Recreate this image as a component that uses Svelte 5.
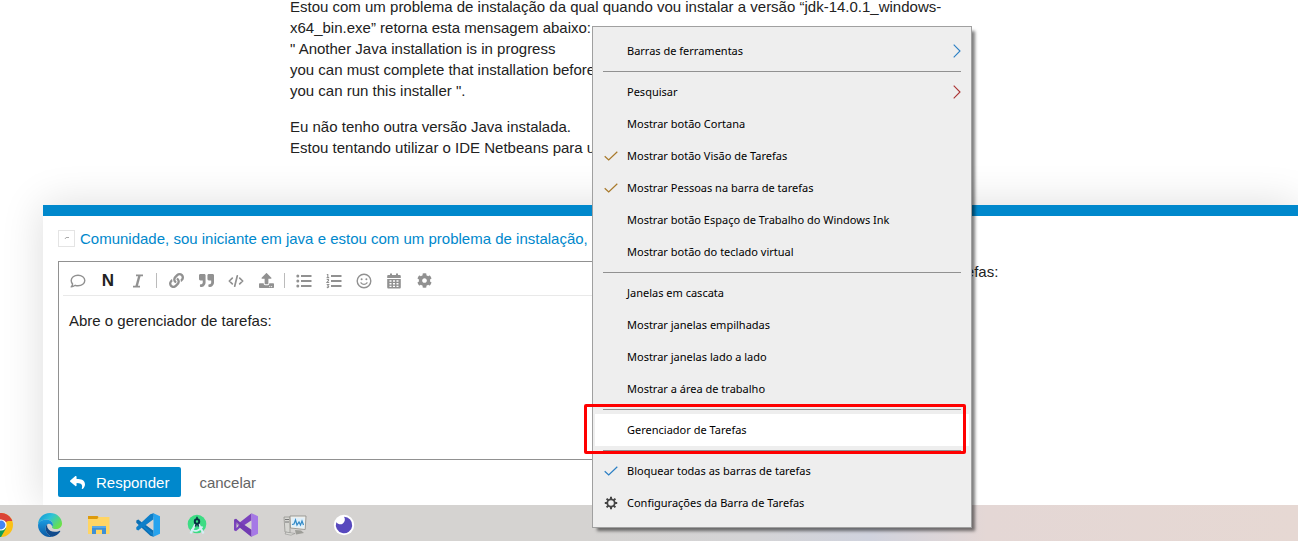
<script>
  const message = 'Abre o gerenciador de tarefas:';
  let draft = $state(message);

  const groups = [
    [{ label: 'Barras de ferramentas', submenu: 'blue' }],
    [
      { label: 'Pesquisar', submenu: 'red' },
      { label: 'Mostrar botão Cortana' },
      { label: 'Mostrar botão Visão de Tarefas', check: 'amber' },
      { label: 'Mostrar Pessoas na barra de tarefas', check: 'amber' },
      { label: 'Mostrar botão Espaço de Trabalho do Windows Ink' },
      { label: 'Mostrar botão do teclado virtual' }
    ],
    [
      { label: 'Janelas em cascata' },
      { label: 'Mostrar janelas empilhadas' },
      { label: 'Mostrar janelas lado a lado' },
      { label: 'Mostrar a área de trabalho' }
    ],
    [{ label: 'Gerenciador de Tarefas', active: true }],
    [
      { label: 'Bloquear todas as barras de tarefas', check: 'blue' },
      { label: 'Configurações da Barra de Tarefas', gear: true }
    ]
  ];

  const tools = [
    'comment', 'bold', 'italic', '|', 'link', 'quote', 'code', 'upload', '|',
    'bullets', 'numbers', 'emoji', 'calendar', 'gear'
  ];

  const gearPath = 'M487.4 315.7l-42.6-24.6c4.3-23.2 4.3-47 0-70.2l42.6-24.6c4.9-2.8 7.1-8.6 5.5-14-11.1-35.6-30-67.8-54.7-94.6-3.8-4.1-10-5.1-14.8-2.3L380.8 110c-17.9-15.4-38.5-27.3-60.8-35.1V25.8c0-5.6-3.9-10.5-9.4-11.7-36.7-8.2-74.3-7.8-109.2 0-5.5 1.2-9.4 6.1-9.4 11.7V75c-22.2 7.9-42.8 19.8-60.8 35.1L88.7 85.5c-4.9-2.8-11-1.9-14.8 2.3-24.7 26.7-43.6 58.9-54.7 94.6-1.7 5.4.6 11.2 5.5 14L67.3 221c-4.3 23.2-4.3 47 0 70.2l-42.6 24.6c-4.9 2.8-7.1 8.6-5.5 14 11.1 35.6 30 67.8 54.7 94.6 3.8 4.1 10 5.1 14.8 2.3l42.6-24.6c17.9 15.4 38.5 27.3 60.8 35.1v49.2c0 5.6 3.9 10.5 9.4 11.7 36.7 8.2 74.3 7.8 109.2 0 5.5-1.2 9.4-6.1 9.4-11.7v-49.2c22.2-7.9 42.8-19.8 60.8-35.1l42.6 24.6c4.9 2.8 11 1.9 14.8-2.3 24.7-26.7 43.6-58.9 54.7-94.6 1.5-5.5-.7-11.3-5.6-14.1zM256 336c-44.1 0-80-35.9-80-80s35.9-80 80-80 80 35.9 80 80-35.9 80-80 80z';

  const solid = {
    link: 'M326.612 185.391c59.747 59.809 58.927 155.698.36 214.59-.11.12-.24.25-.36.37l-67.2 67.2c-59.27 59.27-155.699 59.262-214.96 0-59.27-59.26-59.27-155.7 0-214.96l37.106-37.106c9.84-9.84 26.786-3.3 27.294 10.606.648 17.722 3.826 35.527 9.69 52.721 1.986 5.822.567 12.262-3.783 16.612l-13.087 13.087c-28.026 28.026-28.905 73.66-1.155 101.96 28.024 28.579 74.086 28.749 102.325.51l67.2-67.19c28.191-28.191 28.073-73.757 0-101.83-3.701-3.694-7.429-6.564-10.341-8.569a16.037 16.037 0 0 1-6.947-12.606c-.396-10.567 3.348-21.456 11.698-29.806l21.054-21.055c5.521-5.521 14.182-6.199 20.584-1.731a152.482 152.482 0 0 1 20.522 17.197zM467.547 44.449c-59.261-59.262-155.69-59.27-214.96 0l-67.2 67.2c-.12.12-.25.25-.36.37-58.566 58.892-59.387 154.781.36 214.59a152.454 152.454 0 0 0 20.521 17.196c6.402 4.468 15.064 3.789 20.584-1.731l21.054-21.055c8.35-8.35 12.094-19.239 11.698-29.806a16.037 16.037 0 0 0-6.947-12.606c-2.912-2.005-6.64-4.875-10.341-8.569-28.073-28.073-28.191-73.639 0-101.83l67.2-67.19c28.239-28.239 74.3-28.069 102.325.51 27.75 28.3 26.872 73.934-1.155 101.96l-13.087 13.087c-4.35 4.35-5.769 10.79-3.783 16.612 5.864 17.194 9.042 34.999 9.69 52.721.509 13.906 17.454 20.446 27.294 10.606l37.106-37.106c59.271-59.259 59.271-155.699.001-214.959z',
    quote: 'M464 32H336c-26.5 0-48 21.5-48 48v128c0 26.5 21.5 48 48 48h80v64c0 35.3-28.7 64-64 64h-8c-13.3 0-24 10.7-24 24v48c0 13.3 10.7 24 24 24h8c88.4 0 160-71.6 160-160V80c0-26.5-21.5-48-48-48zm-288 0H48C21.5 32 0 53.5 0 80v128c0 26.5 21.5 48 48 48h80v64c0 35.3-28.7 64-64 64h-8c-13.3 0-24 10.7-24 24v48c0 13.3 10.7 24 24 24h8c88.4 0 160-71.6 160-160V80c0-26.5-21.5-48-48-48z',
    upload: 'M296 384h-80c-13.3 0-24-10.7-24-24V192h-87.7c-17.8 0-26.7-21.5-14.1-34.1L242.3 5.7c7.5-7.5 19.8-7.5 27.3 0l152.2 152.2c12.6 12.6 3.7 34.1-14.1 34.1H320v168c0 13.3-10.7 24-24 24zm216-8v112c0 13.3-10.7 24-24 24H24c-13.3 0-24-10.7-24-24V376c0-13.3 10.7-24 24-24h136v8c0 30.9 25.1 56 56 56h80c30.9 0 56-25.1 56-56v-8h136c13.3 0 24 10.7 24 24zm-124 88c0-11-9-20-20-20s-20 9-20 20 9 20 20 20 20-9 20-20zm64 0c0-11-9-20-20-20s-20 9-20 20 9 20 20 20 20-9 20-20z',
    gear: gearPath
  };
</script>

<div class="screen">
  <main class="post">
    <p>
      Estou com um problema de instalação da qual quando vou instalar a versão “jdk-14.0.1_windows-<br />
      x64_bin.exe” retorna esta mensagem abaixo:<br />
      " Another Java installation is in progress<br />
      you can must complete that installation before<br />
      you can run this installer ".
    </p>
    <p>
      Eu não tenho outra versão Java instalada.<br />
      Estou tentando utilizar o IDE Netbeans para u
    </p>
  </main>

  <section class="composer">
    <div class="columns">
      <div class="editor">
        <div class="reply-to">
          <button class="toggle" aria-label="Opções">
            <svg width="6" height="4" viewBox="0 0 6 4"><path d="M1 3L2 1.500H5" fill="none" stroke="#aaa" /></svg>
          </button>
          <a href="#topic">Comunidade, sou iniciante em java e estou com um problema de instalação,</a>
        </div>
        <div class="box">
          <div class="toolbar">
            {#each tools as tool}
              {#if tool === '|'}
                <span class="divider"></span>
              {:else}
                <button class="tool" class:dark={tool === 'bold'} aria-label={tool}>
                  {#if solid[tool]}
                    <svg width="15" height="15" viewBox="0 0 512 512"><path fill="currentColor" d={solid[tool]} /></svg>
                  {:else if tool === 'bold'}
                    N
                  {:else}
                    <svg width="16" height="16" viewBox="0 0 16 16" fill="none" stroke="currentColor">
                      {#if tool === 'comment'}
                        <path stroke-width="1.400" stroke-linejoin="round" d="M8 2.200c3.800 0 6.800 2.300 6.800 5.300s-3 5.300-6.800 5.300c-1 0-2-.2-2.800-.5C4.200 13 2.800 13.800 1.200 13.900c.7-.8 1.300-1.800 1.400-2.900C1.700 10 1.200 8.800 1.200 7.500c0-3 3-5.300 6.800-5.300z" />
                      {:else if tool === 'italic'}
                        <path stroke-width="1.800" d="M6 2.400h7M3 13.600h7" /><path stroke-width="2.400" d="M9.500 2.500L6.500 13.500" />
                      {:else if tool === 'code'}
                        <path stroke-width="1.700" stroke-linecap="round" stroke-linejoin="round" d="M4.300 5.200L1.300 8l3 2.800M11.700 5.200l3 2.800-3 2.800M9.300 2.800L6.700 13.200" />
                      {:else if tool === 'bullets'}
                        <path stroke-width="1.800" d="M5 3h10.500M5 8h10.500M5 13h10.500" />
                        <g fill="currentColor" stroke="none"><circle cx="1.800" cy="3" r="1.500" /><circle cx="1.800" cy="8" r="1.500" /><circle cx="1.800" cy="13" r="1.500" /></g>
                      {:else if tool === 'numbers'}
                        <path stroke-width="1.800" d="M5 3h10.500M5 8h10.500M5 13h10.500" />
                        <path stroke-width="1.100" d="M.8 1.500h1v3M.6 4.600h2.600M.7 6.500h1.800v1L.9 9.500h2.300M.7 11.500h2L1.700 13c1.600 0 1.400 2-.9 1.500" />
                      {:else if tool === 'emoji'}
                        <circle cx="8" cy="8" r="6.800" stroke-width="1.400" />
                        <path stroke-width="1.300" stroke-linecap="round" d="M5 9.800c1.500 2 4.500 2 6 0" />
                        <circle cx="5.600" cy="6.300" r="1" fill="currentColor" stroke="none" /><circle cx="10.400" cy="6.300" r="1" fill="currentColor" stroke="none" />
                      {:else if tool === 'calendar'}
                        <path fill="currentColor" stroke="none" fill-rule="evenodd" d="M4 .5h2V2h4V.5h2V2h1.500c.8 0 1.300.5 1.300 1.300V5H1.200V3.300C1.200 2.500 1.700 2 2.500 2H4zM1.200 6h13.600v8.200c0 .8-.5 1.300-1.300 1.300h-11c-.8 0-1.300-.5-1.300-1.300zM3.500 7.300v1.500h2V7.300zM7 7.300v1.500h2V7.300zM10.500 7.300v1.500h2V7.300zM3.500 10v1.500h2V10zM7 10v1.500h2V10zM10.500 10v1.500h2V10zM3.500 12.700v1.300h2v-1.300zM7 12.700v1.300h2v-1.300zM10.500 12.700v1.300h2v-1.300z" />
                      {/if}
                    </svg>
                  {/if}
                </button>
              {/if}
            {/each}
          </div>
          <textarea aria-label="Resposta" spellcheck="false" bind:value={draft}></textarea>
        </div>
        <div class="actions">
          <button class="submit">
            <svg width="15" height="15" viewBox="0 0 512 512"><path fill="#fff" d="M8.309 189.836L184.313 37.851C199.719 24.546 224 35.347 224 56.015v80.053c160.629 1.839 288 34.032 288 186.258 0 61.441-39.581 122.309-83.333 154.132-13.653 9.931-33.111-2.533-28.077-18.631 45.344-145.012-21.507-183.510-176.590-185.742V360c0 20.700-24.300 31.453-39.687 18.164l-176.004-152c-11.071-9.562-11.086-26.753 0-36.328z" /></svg>
            Responder
          </button>
          <a class="cancel" href="#cancel">cancelar</a>
        </div>
      </div>
      <div class="preview">{draft}</div>
    </div>
  </section>

  <footer class="taskbar">
    <!-- Chrome -->
    <svg viewBox="0 0 24 24">
      <circle cx="12" cy="12" r="12" fill="#fbc116" />
      <path d="M12 12L1.600 6A12 12 0 0 1 22.400 6z" fill="#db4437" />
      <path d="M1.600 6A12 12 0 0 0 12 24L17.200 15 12 12z" fill="#0f9d58" />
      <path d="M12 6h10.400a12 12 0 0 1 1 2H12z" fill="#db4437" />
      <circle cx="12" cy="12" r="5.600" fill="#fff" /><circle cx="12" cy="12" r="4.400" fill="#4285f4" />
    </svg>
    <!-- Edge -->
    <svg viewBox="0 0 24 24">
      <defs>
        <linearGradient id="edge-top" x1="0" y1="0" x2="1" y2=".6"><stop offset="0" stop-color="#0d8fd6" /><stop offset=".5" stop-color="#2fc3d8" /><stop offset="1" stop-color="#6be04a" /></linearGradient>
        <linearGradient id="edge-low" x1="0" y1="0" x2="0" y2="1"><stop offset="0" stop-color="#1b9de2" /><stop offset="1" stop-color="#0c59a4" /></linearGradient>
      </defs>
      <path d="M0 12C0 5 5 0 12 0s12 5 12 10.500c0 3.500-2.700 5.500-6 5.500-2.500 0-4-.8-4-1.600 0-.6.900-1 .9-2.600C14.900 9 12 6.600 8.500 6.600 4 6.600 1 9 0 12z" fill="url(#edge-top)" />
      <path d="M0 12c.6-3.400 4-5.600 8-5.600 4.200 0 6.900 2.500 6.900 5.400 0 .9-.3 1.500-.6 2-.6-2-1.800-3-3.300-3-2 0-3.400 1.900-3.400 4.700 0 4 3 7.300 7 8.300C6.800 25.200 0 19.600 0 12z" fill="url(#edge-low)" />
      <path d="M9.400 11.200c-1.200 1-1.800 2.500-1.800 4.300 0 4 3 7.300 7 8.300 3-.6 5.700-2.400 7.500-5 .4-.7-.1-1.200-.8-.9-5.200 2.300-10.500.2-11.900-3.400-.5-1.200-.5-2.300 0-3.300z" fill="#114a8b" />
    </svg>
    <!-- File explorer -->
    <svg viewBox="0 0 24 24">
      <path d="M1 4h21.500v17H1z" fill="#ffd564" />
      <path d="M1 3h9.500l1 1-1.200 2H1z" fill="#dd9a0c" />
      <path d="M5 21v-8h14v8h-4v-4.200H9V21z" fill="#3e8fd6" />
      <path d="M5 13h14v2H5z" fill="#5aa9e6" />
    </svg>
    <!-- Visual Studio Code -->
    <svg viewBox="0 0 24 24">
      <path d="M17.500.3L6.800 10.200 2.300 6.600.3 7.600v2.200l14 13 3.200 1V17l-9-6.500 9-7z" fill="#0a6fb4" />
      <path d="M17.500 23.700L6.800 13.800 2.300 17.400l-2-1v-2.200l14-13 3.200-1V7l-9 6.500 9 7z" fill="#0e7fc9" />
      <path d="M9.800 12L17.500 6.200v11.600z" fill="#d5d3d2" />
      <path d="M17.500.2L24 3.200v17.600l-6.500 3z" fill="#26a3ee" />
    </svg>
    <!-- Android Studio -->
    <svg viewBox="0 0 24 24">
      <circle cx="12" cy="11" r="9.300" fill="#3ddc84" />
      <path d="M11 10L5.500 20.500M13 10l5.500 10.500" stroke="#d5eef5" stroke-width="2.200" />
      <path d="M6 16.500c4 2.700 9 1 11.500-3" fill="none" stroke="#d5eef5" stroke-width="1.800" />
      <circle cx="12" cy="8.500" r="2.200" fill="none" stroke="#073042" stroke-width="2" /><path d="M12 3.800v3M11.300 11l-.8 2.600M12.700 11l.8 2.600" stroke="#073042" stroke-width="1.500" />
    </svg>
    <!-- Visual Studio -->
    <svg viewBox="0 0 24 24">
      <path d="M0 6.800l2-1 4 3.400 11.500-9V24L6 14.800l-4 3.400-2-1zM2.500 9v6l3-3zM17.500 7.200L10.500 12l7 4.800z" fill="#7b43bd" fill-rule="evenodd" />
      <path d="M0 6.800l2-1 4 3.400L17.500 17v6.800L6 14.800 2.500 11z" fill="#6a35a8" opacity=".5" />
      <path d="M17.500.2L24 3.200v17.600l-6.500 3z" fill="#a679e6" />
    </svg>
    <!-- Performance monitor -->
    <svg viewBox="0 0 24 24">
      <path d="M1 4h6v16l-5-1z" fill="#d6d6d2" stroke="#8c8c88" stroke-width=".7" /><path d="M2 6.500h4M2 9h4" stroke="#777" />
      <path d="M7 3h16l-.8 13.500L7.500 15z" fill="#f0f0ec" stroke="#8a8a86" stroke-width=".8" />
      <path d="M8.700 4.700h12.700l-.6 10-11.800-1z" fill="#dff0fb" />
      <path d="M9 11.500l2-.5 1.500-4 1.500 5 2-3 1.500 3 1.500-4 1.500 4" fill="none" stroke="#3189c7" stroke-width="1.200" />
      <path d="M12 17l6 .5 3 2.500-8 1.500z" fill="#9d9d98" /><path d="M3 19l9 1.500-4 1.700L2 21z" fill="#d8d8d3" stroke="#888" stroke-width=".5" />
    </svg>
    <!-- Insomnia -->
    <svg viewBox="0 0 24 24">
      <circle cx="12" cy="12" r="10.200" fill="#fff" />
      <path d="M12 3.800A8.200 8.200 0 1 1 4.300 9.300 4.600 4.600 0 1 0 12 3.800z" fill="#5849be" />
    </svg>
  </footer>

  <div class="menu" role="menu">
    {#each groups as group, g}
      {#if g > 0}<div class="rule"></div>{/if}
      {#each group as item}
        <button class="item" class:active={item.active} role="menuitem">
          <span class="mark {item.check ?? ''}">
            {#if item.check}
              <svg width="14" height="10" viewBox="0 0 14 10"><path d="M.7 5.200l4 3.800L13.300.7" fill="none" stroke="currentColor" stroke-width="1.200" /></svg>
            {:else if item.gear}
              <svg width="14" height="14" viewBox="0 0 14 14">
                <circle cx="7" cy="7" r="3.700" fill="none" stroke="#444" stroke-width="1.800" />
                <path d="M11 7h2.200M9.800 9.800l1.600 1.600M7 11v2.200M4.200 9.800l-1.600 1.600M3 7H.8M4.200 4.200L2.600 2.600M7 3V.8M9.800 4.200l1.600-1.600" stroke="#444" stroke-width="2" />
              </svg>
            {/if}
          </span>
          <span class="label">{item.label}</span>
          {#if item.submenu}
            <svg class="arrow {item.submenu}" width="8" height="14" viewBox="0 0 8 14"><path d="M.7.700L7 7 .7 13.300" fill="none" stroke="currentColor" stroke-width="1.100" /></svg>
          {/if}
          {#if item.active}<span class="highlight"></span>{/if}
        </button>
      {/each}
    {/each}
  </div>
</div>

<style>
  :global(body) {
    margin: 0;
    background: #fff;
  }
  .screen {
    position: relative;
    display: flex;
    flex-direction: column;
    min-height: 100vh;
    overflow: hidden;
    color: #222;
    font: 15px/21px "Liberation Sans", Arial, sans-serif;
  }
  button {
    border: 0;
    padding: 0;
    background: none;
    color: inherit;
    font: inherit;
  }
  a {
    text-decoration: none;
  }
  svg {
    display: block;
    flex: none;
  }

  .post {
    flex: 1;
    margin-top: -4px;
    padding: 0 15px 32px 290px;
  }
  .post p {
    margin: 0 0 15px;
    white-space: nowrap;
  }

  .composer {
    position: relative;
    margin-left: 43px;
    border-top: 11px solid #0088cc;
    background: #fff;
    box-shadow: 0 0 40px rgba(0, 0, 0, 0.14);
  }
  .columns {
    display: grid;
    grid-template-columns: 59fr 41fr;
    gap: 15px;
    padding: 11px 0 8px 15px;
  }
  .editor {
    min-width: 0;
  }
  .reply-to {
    display: flex;
    align-items: center;
    gap: 5px;
    height: 22px;
    white-space: nowrap;
  }
  .reply-to a {
    color: #0088cc;
  }
  .toggle {
    display: grid;
    place-items: center;
    width: 17px;
    height: 17px;
    border: 1px solid #e4e4e4;
  }
  .box {
    margin-top: 12px;
    border: 1px solid #919191;
  }
  .toolbar {
    display: flex;
    align-items: center;
    height: 34px;
    margin-left: 4px;
    padding-top: 4px;
    box-sizing: border-box;
    border-bottom: 1px solid #e9e9e9;
    color: #919191;
  }
  .tool {
    display: grid;
    place-items: center;
    width: 30px;
    height: 28px;
  }
  .tool.dark {
    color: #222;
    font-size: 17px;
    font-weight: bold;
  }
  .divider {
    width: 1px;
    height: 15px;
    margin: 0 4px 0 3px;
    background: #bbb;
  }
  textarea {
    display: block;
    box-sizing: border-box;
    width: 100%;
    height: 163px;
    padding: 14px 10px;
    border: 0;
    outline: 0;
    resize: none;
    background: none;
    color: #222;
    font: inherit;
  }
  .actions {
    display: flex;
    align-items: center;
    gap: 18px;
    margin-top: 7px;
  }
  .submit {
    display: flex;
    align-items: center;
    gap: 11px;
    height: 30px;
    padding: 0 12px;
    border-radius: 2px;
    background: #0088cc;
    color: #fff;
  }
  .cancel {
    color: #646464;
  }
  .preview {
    padding-top: 34px;
  }

  .taskbar {
    position: relative;
    display: flex;
    align-items: center;
    gap: 25px;
    height: 36px;
    padding-top: 4px;
    box-sizing: border-box;
    background: linear-gradient(90deg, #d5d3d1 0 45%, #d4d4d6 58%, #d0d3de 67%, #e4d7d5 76%, #e6d8d3);
  }
  .taskbar svg {
    width: 24px;
    height: 24px;
  }
  .taskbar svg:first-child {
    margin-left: -11px;
  }

  .menu {
    position: absolute;
    top: 26px;
    left: 592px;
    box-sizing: border-box;
    width: 380px;
    padding: 8px 2px;
    border: 1px solid #a0a0a0;
    background: #eee;
    box-shadow: 4px 4px 3px -1px rgba(0, 0, 0, 0.5);
    color: #000;
    font: 11px/16px "Noto Sans", "Open Sans", sans-serif;
  }
  .item {
    position: relative;
    display: flex;
    align-items: center;
    width: 100%;
    height: 32px;
    padding: 0 8px;
    text-align: left;
    white-space: nowrap;
  }
  .item.active {
    background: #fff;
  }
  .mark {
    display: grid;
    place-items: center;
    width: 16px;
    margin-right: 8px;
  }
  .label {
    flex: 1;
  }
  .amber {
    color: #a8792a;
  }
  .blue {
    color: #2b7fc4;
  }
  .red {
    color: #a33;
  }
  .rule {
    height: 1px;
    margin: 4px 8px;
    background: #919191;
  }
  .highlight {
    position: absolute;
    inset: -10px 3px -8px -11px;
    border: 3px solid #f00;
    border-radius: 2px;
  }
</style>
